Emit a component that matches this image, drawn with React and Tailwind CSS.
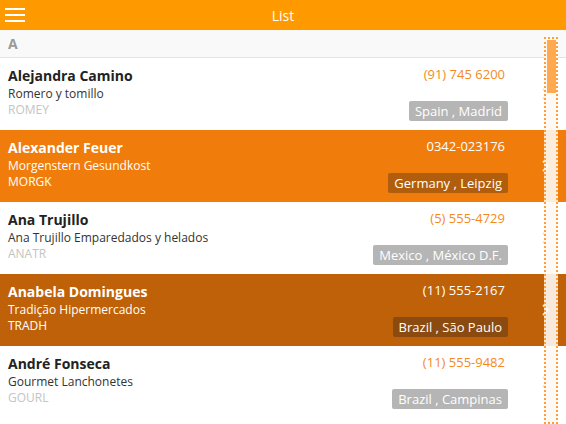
import React from 'react';

const customers = [
    { name: 'Alejandra Camino', company: 'Romero y tomillo', code: 'ROMEY', phone: '(91) 745 6200', place: 'Spain , Madrid', state: 'normal' },
    { name: 'Alexander Feuer', company: 'Morgenstern Gesundkost', code: 'MORGK', phone: '0342-023176', place: 'Germany , Leipzig', state: 'hover' },
    { name: 'Ana Trujillo', company: 'Ana Trujillo Emparedados y helados', code: 'ANATR', phone: '(5) 555-4729', place: 'Mexico , México D.F.', state: 'normal' },
    { name: 'Anabela Domingues', company: 'Tradição Hipermercados', code: 'TRADH', phone: '(11) 555-2167', place: 'Brazil , São Paulo', state: 'selected' },
    { name: 'André Fonseca', company: 'Gourmet Lanchonetes', code: 'GOURL', phone: '(11) 555-9482', place: 'Brazil , Campinas', state: 'normal' },
];

const Row = ({ c }) => {
    const rowBg = c.state === 'hover' ? 'bg-[#f07c0b]' : c.state === 'selected' ? 'bg-[#bf6108]' : 'bg-white';
    const active = c.state !== 'normal';
    const badgeBg = c.state === 'hover' ? 'bg-[#b05d0e]' : c.state === 'selected' ? 'bg-[#8a4a10]' : 'bg-[#b5b5b5]';
    return (
        <div className={`relative flex h-[72px] shrink-0 ${rowBg}`}>
            <div className="flex-1 pl-2 pt-[9px]">
                <div className={`text-[14px] font-bold leading-[18px] ${active ? 'text-white' : 'text-[#222]'}`}>{c.name}</div>
                <div className={`text-[12px] leading-[17px] ${active ? 'text-white' : 'text-[#333]'}`}>{c.company}</div>
                <div className={`text-[12px] leading-[16px] ${active ? 'text-white' : 'text-[#c4c4c4]'}`}>{c.code}</div>
            </div>
            <div className="box-content flex w-[160px] flex-col items-end justify-between pt-[7px] pb-[9px] pr-[58px]">
                <div className={`pr-[3px] text-[13px] leading-[18px] ${active ? 'text-white' : 'text-[#f28a1f]'}`}>{c.phone}</div>
                <div className={`rounded-[2px] px-[6px] text-[13px] leading-[20px] text-white ${badgeBg}`}>{c.place}</div>
            </div>
            {/* chevron, mostly hidden by the scrollbar */}
            <svg className="absolute right-[16px] top-[30px]" width="8" height="12" viewBox="0 0 8 12">
                <path d="M1 1 L6 6 L1 11" fill="none" stroke="#e6e6e6" strokeWidth="2" />
            </svg>
        </div>
    );
};

export default function App() {
    return (
        <div className="relative flex h-[424px] w-[566px] flex-col overflow-hidden bg-white" style={{ fontFamily: '"Open Sans", "Noto Sans", sans-serif' }}>
            <header className="relative flex h-[30px] shrink-0 items-center justify-center bg-[#ff9900]">
                <button className="absolute left-[5px] top-[8px] flex h-[14px] w-[20px] flex-col justify-between">
                    <span className="block h-[2px] w-full bg-white"></span>
                    <span className="block h-[2px] w-full bg-white"></span>
                    <span className="block h-[2px] w-full bg-white"></span>
                </button>
                <span className="text-[14px] text-white">List</span>
            </header>

            <div className="flex h-[28px] shrink-0 items-center border-b border-[#e4e4e4] bg-[#f9f9f9] pl-2">
                <span className="text-[14px] font-bold text-[#9a9a9a]">A</span>
            </div>

            {customers.map((c) => (
                <Row key={c.code} c={c} />
            ))}

            {/* Scrollbar */}
            <div className="absolute left-[544px] top-[37px] bottom-0 w-[14px] border-2 border-dotted border-[#ff9f3a] bg-[#fdf8f3]/90">
                <div className="mx-auto mt-[1px] h-[53px] w-[9px] bg-[#ffaa50]"></div>
            </div>
        </div>
    );
}
